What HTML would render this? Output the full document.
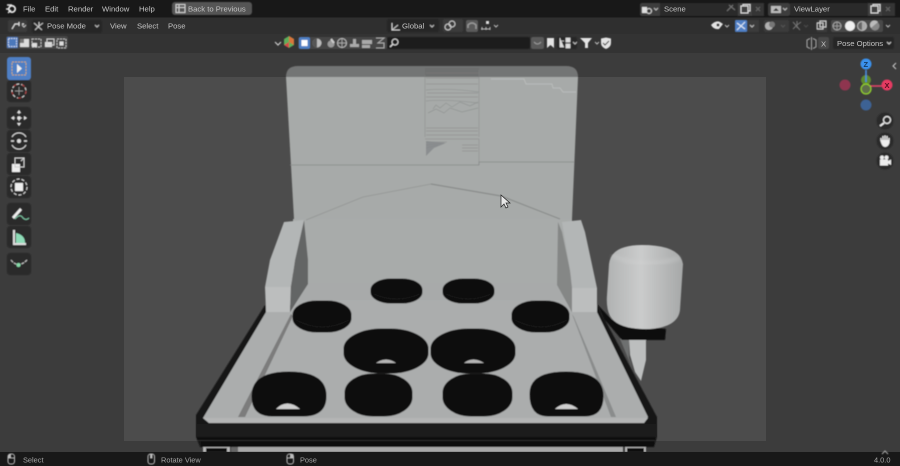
<!DOCTYPE html>
<html><head><meta charset="utf-8"><title>Blender</title>
<style>
html,body{margin:0;padding:0;background:#3d3d3d;width:900px;height:466px;overflow:hidden}
svg{display:block}
text{font-family:"Liberation Sans",sans-serif;font-size:7.7px;fill:#c4c4c4}
.d{fill:#a4a4a4;font-size:7.4px}
</style></head><body>
<svg width="900" height="466" viewBox="0 0 900 466" xmlns="http://www.w3.org/2000/svg">
<defs>
<linearGradient id="mal" x1="0" x2="1" y1="0" y2="0"><stop offset="0" stop-color="#b0b2b2"/><stop offset=".45" stop-color="#cbcccc"/><stop offset="1" stop-color="#a6a8a8"/></linearGradient>
<filter id="b"><feGaussianBlur stdDeviation=".45"/></filter>
<filter id="b2"><feGaussianBlur stdDeviation=".4"/></filter>
<filter id="b3"><feGaussianBlur stdDeviation=".25"/></filter>
<filter id="b4"><feGaussianBlur stdDeviation="1.500"/></filter>
</defs>
<!-- viewport -->
<rect width="900" height="466" fill="#3c3c3c"/>
<rect x="124" y="77" width="642" height="364" fill="#4c4c4c"/>
<g filter="url(#b)">
<!-- back panel -->
<path d="M286 77Q286 66 298 66H566Q578 66 578 77Z" fill="#737575"/>
<path d="M286 77H578L572 219H294Z" fill="#a7aaa9"/>
<path d="M425 68H479V77H425Z" fill="#6e7070"/>
<!-- textured patch -->
<g fill="none" stroke="#7f8382" stroke-width=".7" opacity=".55">
<path d="M426 73H479M426 78H479M426 84H478M426 90Q450 88 479 92M427 93H478M426 97H478M426 101Q445 99 478 103M433 109L436 105L440 108L446 103L452 107L460 102L470 106L478 102M428 113L436 109L444 113L450 108L462 112L478 108M426 128H478M426 131H478M426 135H478" />
<path d="M425 75V137M479 70V137M425 139H479V165" />
<path d="M426 142H447M426 145L444 143M426 148L438 145M462 145H478M462 148H478M462 151H478"/>
</g>
<path d="M426 141V156L434 148L446 143Z" fill="#84878a" opacity=".8"/>
<path d="M491 79H524L526 84H552L553 88H560L563 92H576" fill="none" stroke="#bfc2c1" stroke-width=".7"/>
<path d="M290 165H479L479 162H574" fill="none" stroke="#868988" stroke-width=".7"/>
<!-- lower wall -->
<path d="M293 219H572V290H293Z" fill="#a8abaa"/>
<path d="M306 220L363 197L431 184" fill="none" stroke="#979a99" stroke-width="1"/>
<path d="M431 184L501 196L560 219" fill="none" stroke="#898c8b" stroke-width="1.200"/>
<!-- black rim -->
<path d="M265 305L196 415V437L200 447H654L657 437V417L597 305Z" fill="#161616"/>
<!-- floor -->
<path d="M266 312H290L308 283H557L572 312H597L648 417L644 423H209L203 418Z" fill="#abadad"/>
<path d="M203 418H648L644 423H209Z" fill="#b4b5b5"/>
<path d="M308 283H557L566 300H297Z" fill="#a8aaaa"/>
<!-- front face -->
<path d="M197 424H656V437H197Z" fill="#1d1d1d"/>
<path d="M197 437H655V440H197Z" fill="#101010"/>
<path d="M197 440.500H655" stroke="#333" stroke-width=".7"/>
<path d="M201 441H654V447H201Z" fill="#111"/>
<path d="M238 447H623V452H238Z" fill="#a8a8a8"/>
<rect x="203" y="447" width="27" height="5" fill="#b8b8b8"/><rect x="206" y="448" width="21" height="4" fill="#111"/>
<rect x="625" y="447" width="21" height="5" fill="#b8b8b8"/><rect x="627" y="448" width="17" height="4" fill="#111"/>
<rect x="231" y="447" width="7" height="5" fill="#666"/>
<!-- grooves -->
<path d="M291 314L293 316L245 417H238Z" fill="#7b7c7c"/>
<path d="M572 314L574 317L616 417L611 417Z" fill="#8a8c8c"/>
<!-- inner wall shades -->
<path d="M304 220L308 260V284L290 312L292 280L295 260Z" fill="#646565"/>
<path d="M558 222L557 285L572 312V280L562 232Z" fill="#858786"/>
<!-- arms -->
<path d="M284 222L304 220L295 260L292 280L291 287H265L270 260Z" fill="#b3b6b6"/>
<path d="M265 287H291L290 312H266Z" fill="#bcbebe"/>
<path d="M562 222L581 220L585 232L597 288H572L570 270Z" fill="#b3b6b6"/>
<path d="M572 288H597V305L597 312L572 312Z" fill="#bcbebe"/>
<!-- mallet -->
<path d="M620 339H629V358L633 370Z" fill="#6e6f6f"/>
<path d="M629 339H646V360L641 381L635 372L630 355Z" fill="#bcbebe"/>
<path d="M597 304L612 320L666 329L665 340L622 340L605 320Z" fill="#0b0b0b"/>
<path d="M609 264Q611 245 642 245Q680 245 683 264L680 310Q678 327 650 329Q618 330 610 316Q606 308 607 295Z" fill="url(#mal)"/>
<path d="M612 255Q640 270 680 258" fill="none" stroke="#d6d7d7" stroke-width="5" opacity=".25" filter="url(#b4)"/>
<!-- holes -->
<g fill="#0a0a0a" stroke="#141414" stroke-width="1">
<rect x="371" y="279" width="51" height="24" rx="20" ry="11"/>
<rect x="443" y="279" width="51" height="24" rx="20" ry="11"/>
<rect x="293" y="301" width="58" height="31" rx="24" ry="14"/>
<rect x="512" y="301" width="57" height="31" rx="24" ry="14"/>
<rect x="344" y="329" width="84" height="44" rx="38" ry="20"/>
<rect x="431" y="329" width="84" height="44" rx="38" ry="20"/>
<path d="M252 396Q252 372 289 372Q326 372 326 396Q326 416 303 416H272Q252 416 252 396Z"/>
<rect x="345" y="374" width="67" height="42" rx="28" ry="19"/>
<rect x="443" y="374" width="69" height="42" rx="28" ry="19"/>
<path d="M530 394Q530 372 566 372Q603 372 603 396Q603 416 585 416H548Q530 416 530 394Z"/>
</g>
<g fill="none" stroke="#1c1c1c" stroke-width=".8">
<path d="M374 294Q396 304 420 294M446 294Q468 304 491 294M296 320Q322 334 349 320M515 320Q541 334 567 320"/>
</g>
<path d="M376 363Q386 356 396 363Z" fill="#b5b5b5"/>
<path d="M464 363Q473 356 484 363Z" fill="#b5b5b5"/>
<path d="M276 409Q287 398 300 409Z" fill="#cfcfcf"/>
<path d="M555 409Q566 399 578 409Z" fill="#cfcfcf"/>
</g>
<!-- cursor -->
<path d="M501 195L501 207L504 204L506 208L508 207L506 203L510 203Z" fill="#e8e8e8" stroke="#222" stroke-width=".7"/>

<!-- top bars -->
<rect width="900" height="17.500" fill="#181818"/>
<rect y="17.500" width="900" height="16.500" fill="#2f2f2f"/>
<rect y="34" width="900" height="19" fill="#333"/>
<rect y="452" width="900" height="14" fill="#181818"/>

<g filter="url(#b2)">
<!-- blender logo -->
<g fill="none" stroke="#e4e4e4"><circle cx="12" cy="9" r="3.200" stroke-width="1.800"/><path d="M7 5L12 5M6 9H9M8 13L11 10" stroke-width="1.400"/></g>
<rect x="172" y="2" width="80" height="13" rx="3" fill="#545454"/>
<g fill="none" stroke="#cfcfcf"><rect x="176" y="4.500" width="9" height="8"/><path d="M176 7.500H185M179 4.500V12.500"/></g>
<!-- second row boxes -->
<rect x="8" y="20" width="19" height="12" rx="2" fill="#3b3b3b"/>
<rect x="32" y="20" width="70" height="13" rx="2" fill="#272727"/>
<path d="M12 29L15 24H19M19 22V26M22 24L24 24" stroke="#dcdcdc" stroke-width="1.200" fill="none"/>
<path d="M22 25l2 2 2-2M95 25l2 2 2-2" stroke="#bbb" fill="none"/>
<path d="M34 23L42 30M39 22V28M35 30L39 26M43 23L39 26" stroke="#c8c8c8" fill="none"/>
<!-- select mode -->
<rect x="6" y="36" width="62" height="13" rx="2" fill="#444"/>
<rect x="7" y="37" width="11" height="11" rx="1" fill="#4b78bb"/>
<rect x="8.500" y="38.500" width="8" height="8" fill="none" stroke="#d0dcf0" stroke-dasharray="1.500 1"/>
<path d="M20 39H29V47H20Z" fill="#ddd"/><path d="M20 39H24V43H20Z" fill="#777"/>
<path d="M32 39H41V47H32Z" fill="none" stroke="#bbb" stroke-dasharray="2 1"/><path d="M32 43H37V47H32Z" fill="#ddd"/>
<path d="M45 42H52V47H45Z" fill="#ddd"/><rect x="47" y="39" width="7" height="6" fill="none" stroke="#ccc"/>
<rect x="57" y="39" width="9" height="9" fill="none" stroke="#bbb" stroke-dasharray="2 1"/><rect x="59.500" y="41.500" width="4" height="4" fill="#ddd"/>
<!-- center row 1 -->
<rect x="387" y="19" width="52" height="13" rx="2" fill="#272727"/>
<path d="M392 23V30H400M392 30L398 25" stroke="#ccc" fill="none"/>
<path d="M430 25l2 2 2-2M456 25l2 2 2-2M494 25l2 2 2-2" stroke="#bbb" fill="none"/>
<rect x="443" y="19" width="20" height="13" rx="2" fill="#3b3b3b"/>
<circle cx="448" cy="27" r="3" fill="none" stroke="#ccc"/><circle cx="452" cy="24" r="3" fill="none" stroke="#ccc"/>
<rect x="466" y="20" width="12" height="12" rx="2" fill="#5a5a5a"/>
<path d="M468 28V25Q472 21 476 25V29" stroke="#999" stroke-width="1.500" fill="none"/>
<path d="M481 29H490M482 27V30M486 27V30M490 27V30" stroke="#bbb" fill="none"/><rect x="486" y="21" width="3" height="3" fill="#ddd"/>
<!-- center row 2 -->
<path d="M275 42l3 3 3-3" stroke="#ccc" fill="none" stroke-width="1.200"/>
<path d="M284 39L289 36L294 39V45L289 48L284 45Z" fill="#5fae5a"/><path d="M289 36L294 39V45L289 42Z" fill="#d8743a"/><path d="M284 45L289 48V42Z" fill="#d64a4a"/>
<rect x="298" y="37" width="89" height="12" rx="2" fill="#454545"/>
<rect x="299" y="37" width="11" height="12" rx="2" fill="#4f7fc4"/>
<rect x="301.500" y="40" width="6" height="6" fill="#fff"/>
<circle cx="317" cy="43" r="4.500" fill="#bbb"/><path d="M317 38.500A4.500 4.500 0 0 0 317 47.500Z" fill="#555"/>
<circle cx="331" cy="44" r="3.500" fill="#999"/><path d="M331 39l3 4" stroke="#ccc" stroke-width="2"/>
<circle cx="342" cy="43" r="4.500" fill="none" stroke="#bbb"/><path d="M338 43H346M342 39V47" stroke="#bbb" stroke-width=".7"/>
<path d="M350 47H359V44H350ZM353 44V39H356V44" fill="#aaa"/>
<path d="M362 40H372V44H362ZM362 45H370V48H362Z" fill="#aaa"/>
<path d="M376 38H384L378 43H384V48H376" fill="none" stroke="#aaa"/>
<rect x="387" y="37" width="143" height="12" rx="2" fill="#1d1d1d"/>
<circle cx="395" cy="42" r="3" fill="none" stroke="#ddd"/><path d="M393 44L390 47" stroke="#ddd" stroke-width="1.300"/>
<rect x="531" y="37" width="13" height="12" rx="2" fill="#5a5a5a"/>
<path d="M534 42Q537.500 46 541 42" stroke="#999" fill="none"/>
<path d="M547 38H554V48L550.500 45L547 48Z" fill="#e4e4e4"/>
<rect x="557" y="37" width="20" height="12" rx="2" fill="#272727"/>
<path d="M560 38V47H564M560 41H564M566 38H570V42H566ZM566 44H570V48H566Z" fill="#ddd" stroke="#ddd" stroke-width=".8"/>
<path d="M573 42l2 2 2-2M595 42l2 2 2-2" stroke="#bbb" fill="none"/>
<path d="M580 38H592L588 43V48L585 48V43Z" fill="#e4e4e4"/>
<path d="M601 38.500L606 37.500L611 38.500V43Q611 47 606 49Q601 47 601 43Z" fill="#e4e4e4"/>
<path d="M603 43l2 2 4-4" stroke="#333" fill="none"/>
<!-- top right scene -->
<rect x="640" y="3" width="24" height="13" rx="2" fill="#3d3d3d"/>
<path d="M642 7H647V13H642Z" fill="#ddd"/><circle cx="649" cy="11" r="2.500" fill="none" stroke="#ddd"/>
<path d="M654 8l2 2 2-2" stroke="#bbb" fill="none"/>
<rect x="660" y="3" width="78" height="13" fill="#292929"/>
<path d="M727 11L733 5M729 5L735 10" stroke="#777" fill="none"/>
<rect x="738" y="3" width="14" height="13" fill="#3f3f3f"/>
<path d="M741 6H748V13H741Z" fill="none" stroke="#ddd"/>
<path d="M743 6V4.500H750V11H748" stroke="#ddd" fill="none"/>
<rect x="752" y="3" width="12" height="13" fill="#343434"/>
<path d="M756 7L760 11M760 7L756 11" stroke="#666"/>
<rect x="768" y="3" width="22" height="13" rx="2" fill="#3d3d3d"/>
<path d="M771 6H781V13H771Z" fill="#bbb"/><path d="M773 11L776 8L779 11Z" fill="#333"/>
<path d="M783 8l2 2 2-2" stroke="#bbb" fill="none"/>
<rect x="790" y="3" width="78" height="13" fill="#292929"/>
<rect x="868" y="3" width="14" height="13" fill="#3f3f3f"/>
<path d="M871 6H878V13H871Z" fill="none" stroke="#ddd"/>
<path d="M873 6V4.500H880V11H878" stroke="#ddd" fill="none"/>
<rect x="882" y="3" width="13" height="13" fill="#343434"/>
<path d="M886 7L890 11M890 7L886 11" stroke="#666"/>
<!-- right row 1 -->
<path d="M711 25Q716 20 720 22L723 24L719 29Q714 30 711 25Z" fill="#e4e4e4"/><circle cx="718" cy="25" r="1.500" fill="#333"/>
<path d="M725 25l2 2 2-2" stroke="#bbb" fill="none"/>
<rect x="735" y="20" width="12" height="12" rx="1" fill="#4f7fc4"/>
<path d="M737 30L745 22M737 23L745 29" stroke="#dce6f5" stroke-width="1.100"/>
<rect x="747" y="20" width="12" height="12" rx="1" fill="#3a3a3a"/>
<path d="M750 25l2 2 2-2" stroke="#bbb" fill="none"/>
<rect x="764" y="20" width="25" height="12" rx="2" fill="#3b3b3b"/>
<circle cx="769" cy="26" r="4" fill="#b0b0b0"/><circle cx="772" cy="24.500" r="3" fill="#777"/>
<path d="M781 25l2 2 2-2" stroke="#555" fill="none"/>
<path d="M793 22L800 30M797 21V28M793 29L797 25M801 22L797 25" stroke="#777" fill="none"/>
<path d="M804 25l2 2 2-2" stroke="#4d4d4d" fill="none"/>
<rect x="817" y="20" width="10" height="12" rx="1" fill="#3b3b3b"/>
<rect x="817" y="23" width="6" height="6" fill="none" stroke="#ccc"/><rect x="820" y="21" width="6" height="6" fill="none" stroke="#ccc"/>
<rect x="831" y="20" width="52" height="12" rx="2" fill="#4a4a4a"/>
<circle cx="837" cy="26" r="4" fill="none" stroke="#aaa"/><path d="M833 26H841M837 22V30" stroke="#aaa" stroke-width=".7"/>
<circle cx="850" cy="26" r="5" fill="#f2f2f2"/>
<circle cx="862" cy="26" r="4.500" fill="#aaa"/><path d="M862 21.500A4.500 4.500 0 0 0 862 30.500Z" fill="#666"/><circle cx="862" cy="26" r="4.500" fill="none" stroke="#bbb"/>
<circle cx="875" cy="26" r="4.500" fill="#888"/><path d="M871 28A4.500 4.500 0 0 1 878 22Z" fill="#bbb"/>
<path d="M886 25l2 2 2-2" stroke="#bbb" fill="none"/>
<!-- right row 2 -->
<path d="M810 38.500L807 40V47L810 48.500M813 38.500L816 40V47L813 48.500M811.500 37V50" stroke="#aaa" fill="none"/>
<rect x="818" y="37" width="11" height="12" rx="2" fill="#484848"/>
<rect x="833" y="37" width="61" height="12" rx="2" fill="#282828"/>
<path d="M887 42l2 2 2-2" stroke="#ccc" fill="none"/>
<!-- left toolbar -->
<g>
<rect x="7" y="57" width="24" height="23" rx="3" fill="#4f7fc4"/>
<rect x="12" y="62" width="14" height="13" fill="none" stroke="#c9a86b" stroke-dasharray="2 1"/>
<path d="M17 64V73L22 68.500Z" fill="#f0f0f0"/>
<rect x="7" y="80" width="24" height="22" rx="3" fill="#2c2c2c"/>
<circle cx="19" cy="91" r="7" fill="none" stroke="#ddd" stroke-dasharray="3 2"/><circle cx="19" cy="91" r="7" fill="none" stroke="#a33" stroke-dasharray="3 6"/>
<path d="M19 87V95M15 91H23" stroke="#aaa" stroke-width=".7"/>
<rect x="7" y="107" width="24" height="22" rx="3" fill="#2c2c2c"/>
<path d="M19 111V125M12 118H26" stroke="#e4e4e4" stroke-width=".8" stroke-dasharray="3 4" /><path d="M19 110l-2 3h4ZM19 126l-2-3h4ZM11 118l3-2v4ZM27 118l-3-2v4Z" fill="#e4e4e4"/><circle cx="19" cy="118" r="1.800" fill="#e4e4e4"/>
<rect x="7" y="130" width="24" height="22" rx="3" fill="#2c2c2c"/>
<path d="M12 137A8 8 0 0 1 26 137M12 145A8 8 0 0 0 26 145" stroke="#ddd" fill="none"/><path d="M11 141H14M24 141H27" stroke="#ddd" stroke-width="1.500"/><circle cx="19" cy="141" r="2" fill="#ddd"/>
<rect x="7" y="153" width="24" height="22" rx="3" fill="#2c2c2c"/>
<rect x="12" y="164" width="8" height="8" fill="#eee"/><rect x="15" y="158" width="9" height="9" fill="none" stroke="#ccc"/><path d="M21 161L24 158" stroke="#ddd"/>
<rect x="7" y="176" width="24" height="22" rx="3" fill="#2c2c2c"/>
<circle cx="19" cy="187" r="8" fill="none" stroke="#ddd" stroke-dasharray="3 2"/><rect x="15" y="183" width="8" height="8" fill="#eee"/>
<rect x="7" y="203" width="24" height="22" rx="3" fill="#2c2c2c"/>
<path d="M12 217L20 208L22 210L14 219Z" fill="#eee"/><path d="M15 219Q20 213 23 218Q26 221 29 218" stroke="#7fc9a6" fill="none"/>
<rect x="7" y="226" width="24" height="22" rx="3" fill="#2c2c2c"/>
<path d="M14 230V244H26" stroke="#ddd" stroke-width="2" fill="none"/><path d="M16 233V243H25Q25 235 16 233Z" fill="#8fdcb8"/>
<rect x="7" y="253" width="24" height="22" rx="3" fill="#2c2c2c"/>
<path d="M11 260Q18 269 27 260" stroke="#ccc" fill="none" stroke-dasharray="3 1"/><circle cx="18.500" cy="265" r="2" fill="#86d9a8"/>
</g>
<!-- gizmo -->
<circle cx="845" cy="85" r="5.500" fill="#8f3550"/>
<circle cx="866" cy="105" r="5.500" fill="#3d6294"/>
<circle cx="866" cy="80" r="5" fill="#5f8a2e"/>
<path d="M868 86H884" stroke="#e8406a" stroke-width="1.500"/>
<path d="M866 70V82" stroke="#4a90e8" stroke-width="1.500"/>
<circle cx="866" cy="64" r="5.500" fill="#3a92ee"/>
<circle cx="887" cy="85" r="5.500" fill="#e53a62"/>
<circle cx="866" cy="89" r="5" fill="#5e6e4a" stroke="#8fce2c" stroke-width="1.300"/>
<path d="M896 63L893 66L896 69" stroke="#ccc" fill="none"/>
<circle cx="885" cy="121" r="8.500" fill="#2b2b2b"/>
<circle cx="887" cy="120" r="3.500" fill="none" stroke="#eee" stroke-width="1.200"/><path d="M884 123L880 126" stroke="#eee" stroke-width="1.800"/>
<circle cx="885" cy="141" r="8.500" fill="#2b2b2b"/>
<path d="M881 141V138M883 140V136M885 140V135.500M887 140V136M889 141V138" stroke="#eee" stroke-width="1.400"/><path d="M880.500 140H889.500V143Q888 147 885 147Q882 147 880.500 141Z" fill="#eee"/>
<circle cx="885" cy="161" r="8.500" fill="#2b2b2b"/>
<rect x="880" y="159.500" width="8" height="6" fill="#eee"/><circle cx="882" cy="157.500" r="2" fill="#eee"/><circle cx="886.500" cy="157.500" r="2" fill="#eee"/><path d="M888 161L891 159.500V165L888 163.500Z" fill="#eee"/>
<path d="M882 454l3-3 3 3" stroke="#aaa" fill="none"/>
<!-- status icons -->
<g fill="none" stroke="#bbb"><rect x="8" y="454" width="6.500" height="10" rx="2.500"/><path d="M8 458H14.500"/><rect x="148" y="454" width="6.500" height="10" rx="2.500"/><rect x="150.500" y="455" width="1.500" height="3" fill="#bbb"/><rect x="287" y="454" width="6.500" height="10" rx="2.500"/><path d="M287 458H293.500"/><path d="M290.500 454.500H293V458H290.500Z" fill="#bbb"/><path d="M11 454.500H8.500V458H11Z" fill="#bbb" stroke="none"/></g>
</g>
<!-- text -->
<g filter="url(#b3)">
<text x="23" y="11.500">File</text>
<text x="45" y="11.500">Edit</text>
<text x="68" y="11.500">Render</text>
<text x="102" y="11.500">Window</text>
<text x="139" y="11.500">Help</text>
<text x="188" y="11.500" fill="#d0d0d0">Back to Previous</text>
<text x="47" y="28.500">Pose Mode</text>
<text x="110" y="28.500">View</text>
<text x="137" y="28.500">Select</text>
<text x="168" y="28.500">Pose</text>
<text x="402" y="28.500">Global</text>
<text x="664" y="11.500">Scene</text>
<text x="794" y="11.500">ViewLayer</text>
<text x="837" y="46">Pose Options</text>
<text x="821" y="46.500">X</text>
<text x="863.500" y="67" font-weight="bold" style="font-size:7.5px;fill:#143b66">Z</text>
<text x="884.500" y="88" font-weight="bold" style="font-size:7.5px;fill:#5a0f22">X</text>
<text x="23" y="462.500" class="d">Select</text>
<text x="161" y="462.500" class="d">Rotate View</text>
<text x="300" y="462.500" class="d">Pose</text>
<text x="874" y="462.500" class="d">4.0.0</text>
</g>
</svg>
</body></html>
